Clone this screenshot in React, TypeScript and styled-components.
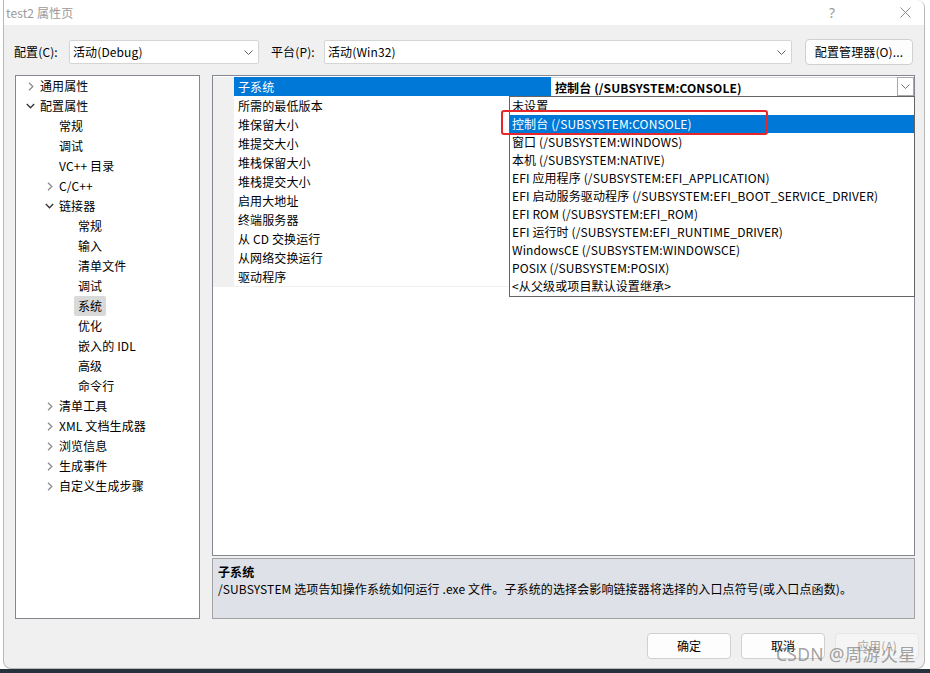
import React from 'react';
import styled, { createGlobalStyle } from 'styled-components';

const GlobalStyle = createGlobalStyle`
  html, body { margin: 0; padding: 0; background: #ffffff; }
  body {
    font-family: "Noto Sans CJK SC", "Noto Sans", sans-serif;
    font-size: 12px;
    letter-spacing: 0.12px;
    color: #000;
  }
  * { box-sizing: border-box; }
`;

const Page = styled.div`
  width: 930px;
  height: 673px;
  display: flex;
  flex-direction: column;
  background: #ffffff;
  overflow: hidden;
`;

const Desk = styled.div`
  height: 4px;
  background: #27313d;
`;

const Window = styled.div`
  position: relative;
  margin-left: 3px;
  width: 922px;
  height: 669px;
  display: flex;
  flex-direction: column;
  border: 1px solid #b8b8b8;
  border-top: none;
  border-radius: 0 8px 8px 8px;
  background: #f0f0f0;
  overflow: hidden;
`;

const TitleBar = styled.div`
  height: 25px;
  flex: none;
  display: flex;
  align-items: center;
  background: #ffffff;
  padding-left: 2px;
`;

const TitleText = styled.span`
  color: #9a9a9a;
  font-size: 12px;
  line-height: 16px;
`;

const TitleControls = styled.div`
  margin-left: auto;
  display: flex;
  align-items: center;
  gap: 31px;
  height: 100%;
`;

const TitleButton = styled.div<{ $w: number }>`
  width: ${(p) => p.$w}px;
  height: 100%;
  display: flex;
  align-items: center;
  justify-content: center;
  color: #9a9a9a;
  font-family: "Noto Sans", sans-serif;
  font-size: 14px;
`;

const Content = styled.div`
  flex: 1;
  display: flex;
  flex-direction: column;
  padding: 14px 9px 10px 11px;
`;

const ConfigRow = styled.div`
  height: 26px;
  display: flex;
  align-items: center;
`;

const ConfigLabel = styled.span<{ $w: number; $ml?: number }>`
  width: ${(p) => p.$w}px;
  margin-left: ${(p) => p.$ml ?? 0}px;
  line-height: 16px;
  white-space: nowrap;
`;

const Select = styled.div<{ $w: number }>`
  width: ${(p) => p.$w}px;
  height: 24px;
  display: flex;
  align-items: center;
  padding: 0 5px 0 3px;
  background: #ffffff;
  border: 1px solid #d5d5d5;
  border-radius: 2px;
  line-height: 16px;
`;

const SelectText = styled.span`
  flex: 1;
`;

const PushButton = styled.div<{ $w: number; $disabled?: boolean }>`
  width: ${(p) => p.$w}px;
  height: 26px;
  display: flex;
  align-items: center;
  justify-content: center;
  background: ${(p) => (p.$disabled ? '#f5f5f5' : '#fdfdfd')};
  border: 1px solid ${(p) => (p.$disabled ? '#e6e6e6' : '#d0d0d0')};
  border-radius: 4px;
  color: ${(p) => (p.$disabled ? '#a8a8a8' : '#000')};
  line-height: 16px;
  white-space: nowrap;
`;

const ManagerButton = styled(PushButton)`
  margin-left: 13px;
`;

const Main = styled.div`
  margin-top: 10px;
  height: 544px;
  display: flex;
  gap: 12px;
`;

const Tree = styled.div`
  width: 185px;
  height: 100%;
  background: #ffffff;
  border: 1px solid #828790;
  display: flex;
  flex-direction: column;
`;

const TreeItem = styled.div<{ $level: number }>`
  height: 20px;
  display: flex;
  align-items: center;
  padding-left: ${(p) => 5 + p.$level * 19}px;
  line-height: 20px;
`;

const TreeToggle = styled.span`
  width: 19px;
  height: 20px;
  display: flex;
  align-items: center;
  justify-content: center;
  flex: none;
`;

const TreeLabel = styled.span<{ $selected?: boolean }>`
  padding: 0 4px;
  margin-left: -4px;
  height: 20px;
  border-radius: 2px;
  white-space: nowrap;
  background: ${(p) => (p.$selected ? '#d9d9d9' : 'transparent')};
`;

const RightColumn = styled.div`
  width: 703px;
  display: flex;
  flex-direction: column;
  gap: 2px;
`;

const Grid = styled.div`
  position: relative;
  height: 481px;
  background: #ffffff;
  border: 1px solid #828790;
  padding-top: 1px;
`;

const Row = styled.div`
  height: 19px;
  display: grid;
  grid-template-columns: 21px 317px 1fr;
`;

const Gutter = styled.div`
  background: #f0f0f0;
`;

const NameCell = styled.div<{ $selected?: boolean }>`
  padding-left: 4px;
  line-height: 19px;
  white-space: nowrap;
  background: ${(p) => (p.$selected ? '#0078d7' : '#ffffff')};
  color: ${(p) => (p.$selected ? '#ffffff' : '#000')};
  border-bottom: 1px solid ${(p) => (p.$selected ? '#0078d7' : '#f0f0f0')};
`;

const ValueCell = styled.div`
  line-height: 18px;
  border-bottom: 1px solid #f0f0f0;
`;

const ComboCell = styled.div`
  display: flex;
  align-items: center;
  border-top: 1px solid #d8d8d8;
  height: 19px;
  padding-left: 4px;
  font-weight: bold;
`;

const ComboText = styled.span`
  flex: 1;
  line-height: 17px;
  white-space: nowrap;
`;

const ComboButton = styled.div`
  width: 17px;
  height: 19px;
  margin-top: -1px;
  border: 1px solid #a9a9a9;
  background: #ffffff;
  display: flex;
  align-items: center;
  justify-content: center;
`;

const DropList = styled.div`
  position: absolute;
  left: 296px;
  top: 20px;
  width: 406px;
  height: 201px;
  background: #ffffff;
  border: 1px solid #646464;
  display: flex;
  flex-direction: column;
`;

const DropItem = styled.div<{ $selected?: boolean }>`
  height: 18px;
  line-height: 18px;
  padding-left: 2px;
  white-space: nowrap;
  background: ${(p) => (p.$selected ? '#0078d7' : '#ffffff')};
  color: ${(p) => (p.$selected ? '#ffffff' : '#000')};
`;

const Highlight = styled.div`
  position: absolute;
  left: 288px;
  top: 34px;
  width: 267px;
  height: 25px;
  border: 2px solid #e5262a;
  border-radius: 3px;
`;

const Description = styled.div`
  height: 61px;
  background: #dee1e7;
  border: 1px solid #a3a3a3;
  padding: 4px 5px;
  line-height: 17px;
`;

const DescTitle = styled.div`
  font-weight: bold;
`;

const ButtonRow = styled.div`
  margin-top: 14px;
  margin-right: -4px;
  display: flex;
  justify-content: flex-end;
  gap: 10px;
`;

const Watermark = styled.div`
  position: absolute;
  left: 772px;
  top: 642px;
  font-family: "Noto Sans", "Noto Sans CJK SC", sans-serif;
  font-size: 17.5px;
  letter-spacing: 0.3px;
  line-height: 24px;
  color: rgba(105, 105, 105, 0.62);
  white-space: nowrap;
  pointer-events: none;
`;

const ChevronDown = ({ color = '#606060' }: { color?: string }) => (
  <svg width="9" height="5" viewBox="0 0 9 5">
    <polyline points="0.5,0.5 4.5,4.5 8.5,0.5" fill="none" stroke={color} strokeWidth="1" />
  </svg>
);

const TreeClosed = () => (
  <svg width="6" height="9" viewBox="0 0 6 9">
    <polyline points="1,0.8 4.8,4.5 1,8.2" fill="none" stroke="#8c8c8c" strokeWidth="1.3" />
  </svg>
);

const TreeOpen = () => (
  <svg width="9" height="6" viewBox="0 0 9 6">
    <polyline points="0.8,1 4.5,4.8 8.2,1" fill="none" stroke="#333" strokeWidth="1.3" />
  </svg>
);

const CloseIcon = () => (
  <svg width="11" height="11" viewBox="0 0 11 11">
    <line x1="0.5" y1="0.5" x2="10.5" y2="10.5" stroke="#8a8a8a" strokeWidth="1" />
    <line x1="10.5" y1="0.5" x2="0.5" y2="10.5" stroke="#8a8a8a" strokeWidth="1" />
  </svg>
);

type TreeNode = { label: string; level: number; toggle?: 'open' | 'closed'; selected?: boolean };

const treeNodes: TreeNode[] = [
  { label: '通用属性', level: 0, toggle: 'closed' },
  { label: '配置属性', level: 0, toggle: 'open' },
  { label: '常规', level: 1 },
  { label: '调试', level: 1 },
  { label: 'VC++ 目录', level: 1 },
  { label: 'C/C++', level: 1, toggle: 'closed' },
  { label: '链接器', level: 1, toggle: 'open' },
  { label: '常规', level: 2 },
  { label: '输入', level: 2 },
  { label: '清单文件', level: 2 },
  { label: '调试', level: 2 },
  { label: '系统', level: 2, selected: true },
  { label: '优化', level: 2 },
  { label: '嵌入的 IDL', level: 2 },
  { label: '高级', level: 2 },
  { label: '命令行', level: 2 },
  { label: '清单工具', level: 1, toggle: 'closed' },
  { label: 'XML 文档生成器', level: 1, toggle: 'closed' },
  { label: '浏览信息', level: 1, toggle: 'closed' },
  { label: '生成事件', level: 1, toggle: 'closed' },
  { label: '自定义生成步骤', level: 1, toggle: 'closed' },
];

const properties = [
  '所需的最低版本',
  '堆保留大小',
  '堆提交大小',
  '堆栈保留大小',
  '堆栈提交大小',
  '启用大地址',
  '终端服务器',
  '从 CD 交换运行',
  '从网络交换运行',
  '驱动程序',
];

const options = [
  '未设置',
  '控制台 (/SUBSYSTEM:CONSOLE)',
  '窗口 (/SUBSYSTEM:WINDOWS)',
  '本机 (/SUBSYSTEM:NATIVE)',
  'EFI 应用程序 (/SUBSYSTEM:EFI_APPLICATION)',
  'EFI 启动服务驱动程序 (/SUBSYSTEM:EFI_BOOT_SERVICE_DRIVER)',
  'EFI ROM (/SUBSYSTEM:EFI_ROM)',
  'EFI 运行时 (/SUBSYSTEM:EFI_RUNTIME_DRIVER)',
  'WindowsCE (/SUBSYSTEM:WINDOWSCE)',
  'POSIX (/SUBSYSTEM:POSIX)',
  '<从父级或项目默认设置继承>',
];

export default function App() {
  return (
    <>
      <GlobalStyle />
      <Page>
        <Window>
          <TitleBar>
            <TitleText>test2 属性页</TitleText>
            <TitleControls>
              <TitleButton $w={46}>?</TitleButton>
              <TitleButton $w={38}>
                <CloseIcon />
              </TitleButton>
            </TitleControls>
          </TitleBar>
          <Content>
            <ConfigRow>
              <ConfigLabel $w={55} $ml={-1}>配置(C):</ConfigLabel>
              <Select $w={190}>
                <SelectText>活动(Debug)</SelectText>
                <ChevronDown />
              </Select>
              <ConfigLabel $w={53} $ml={12}>平台(P):</ConfigLabel>
              <Select $w={468}>
                <SelectText>活动(Win32)</SelectText>
                <ChevronDown />
              </Select>
              <ManagerButton $w={108}>配置管理器(O)...</ManagerButton>
            </ConfigRow>
            <Main>
              <Tree>
                {treeNodes.map((n, i) => (
                  <TreeItem key={i} $level={n.level}>
                    <TreeToggle>
                      {n.toggle === 'closed' && <TreeClosed />}
                      {n.toggle === 'open' && <TreeOpen />}
                    </TreeToggle>
                    <TreeLabel $selected={n.selected}>{n.label}</TreeLabel>
                  </TreeItem>
                ))}
              </Tree>
              <RightColumn>
                <Grid>
                  <Row>
                    <Gutter />
                    <NameCell $selected>子系统</NameCell>
                    <ComboCell>
                      <ComboText>控制台 (/SUBSYSTEM:CONSOLE)</ComboText>
                      <ComboButton>
                        <ChevronDown color="#707070" />
                      </ComboButton>
                    </ComboCell>
                  </Row>
                  {properties.map((p) => (
                    <Row key={p}>
                      <Gutter />
                      <NameCell>{p}</NameCell>
                      <ValueCell />
                    </Row>
                  ))}
                  <DropList>
                    {options.map((o, i) => (
                      <DropItem key={o} $selected={i === 1}>
                        {o}
                      </DropItem>
                    ))}
                  </DropList>
                  <Highlight />
                </Grid>
                <Description>
                  <DescTitle>子系统</DescTitle>
                  <div>
                    /SUBSYSTEM 选项告知操作系统如何运行 .exe 文件。子系统的选择会影响链接器将选择的入口点符号(或入口点函数)。
                  </div>
                </Description>
              </RightColumn>
            </Main>
            <ButtonRow>
              <PushButton $w={84}>确定</PushButton>
              <PushButton $w={84}>取消</PushButton>
              <PushButton $w={84} $disabled>
                应用(A)
              </PushButton>
            </ButtonRow>
          </Content>
          <Watermark>CSDN @周游火星</Watermark>
        </Window>
        <Desk />
      </Page>
    </>
  );
}
